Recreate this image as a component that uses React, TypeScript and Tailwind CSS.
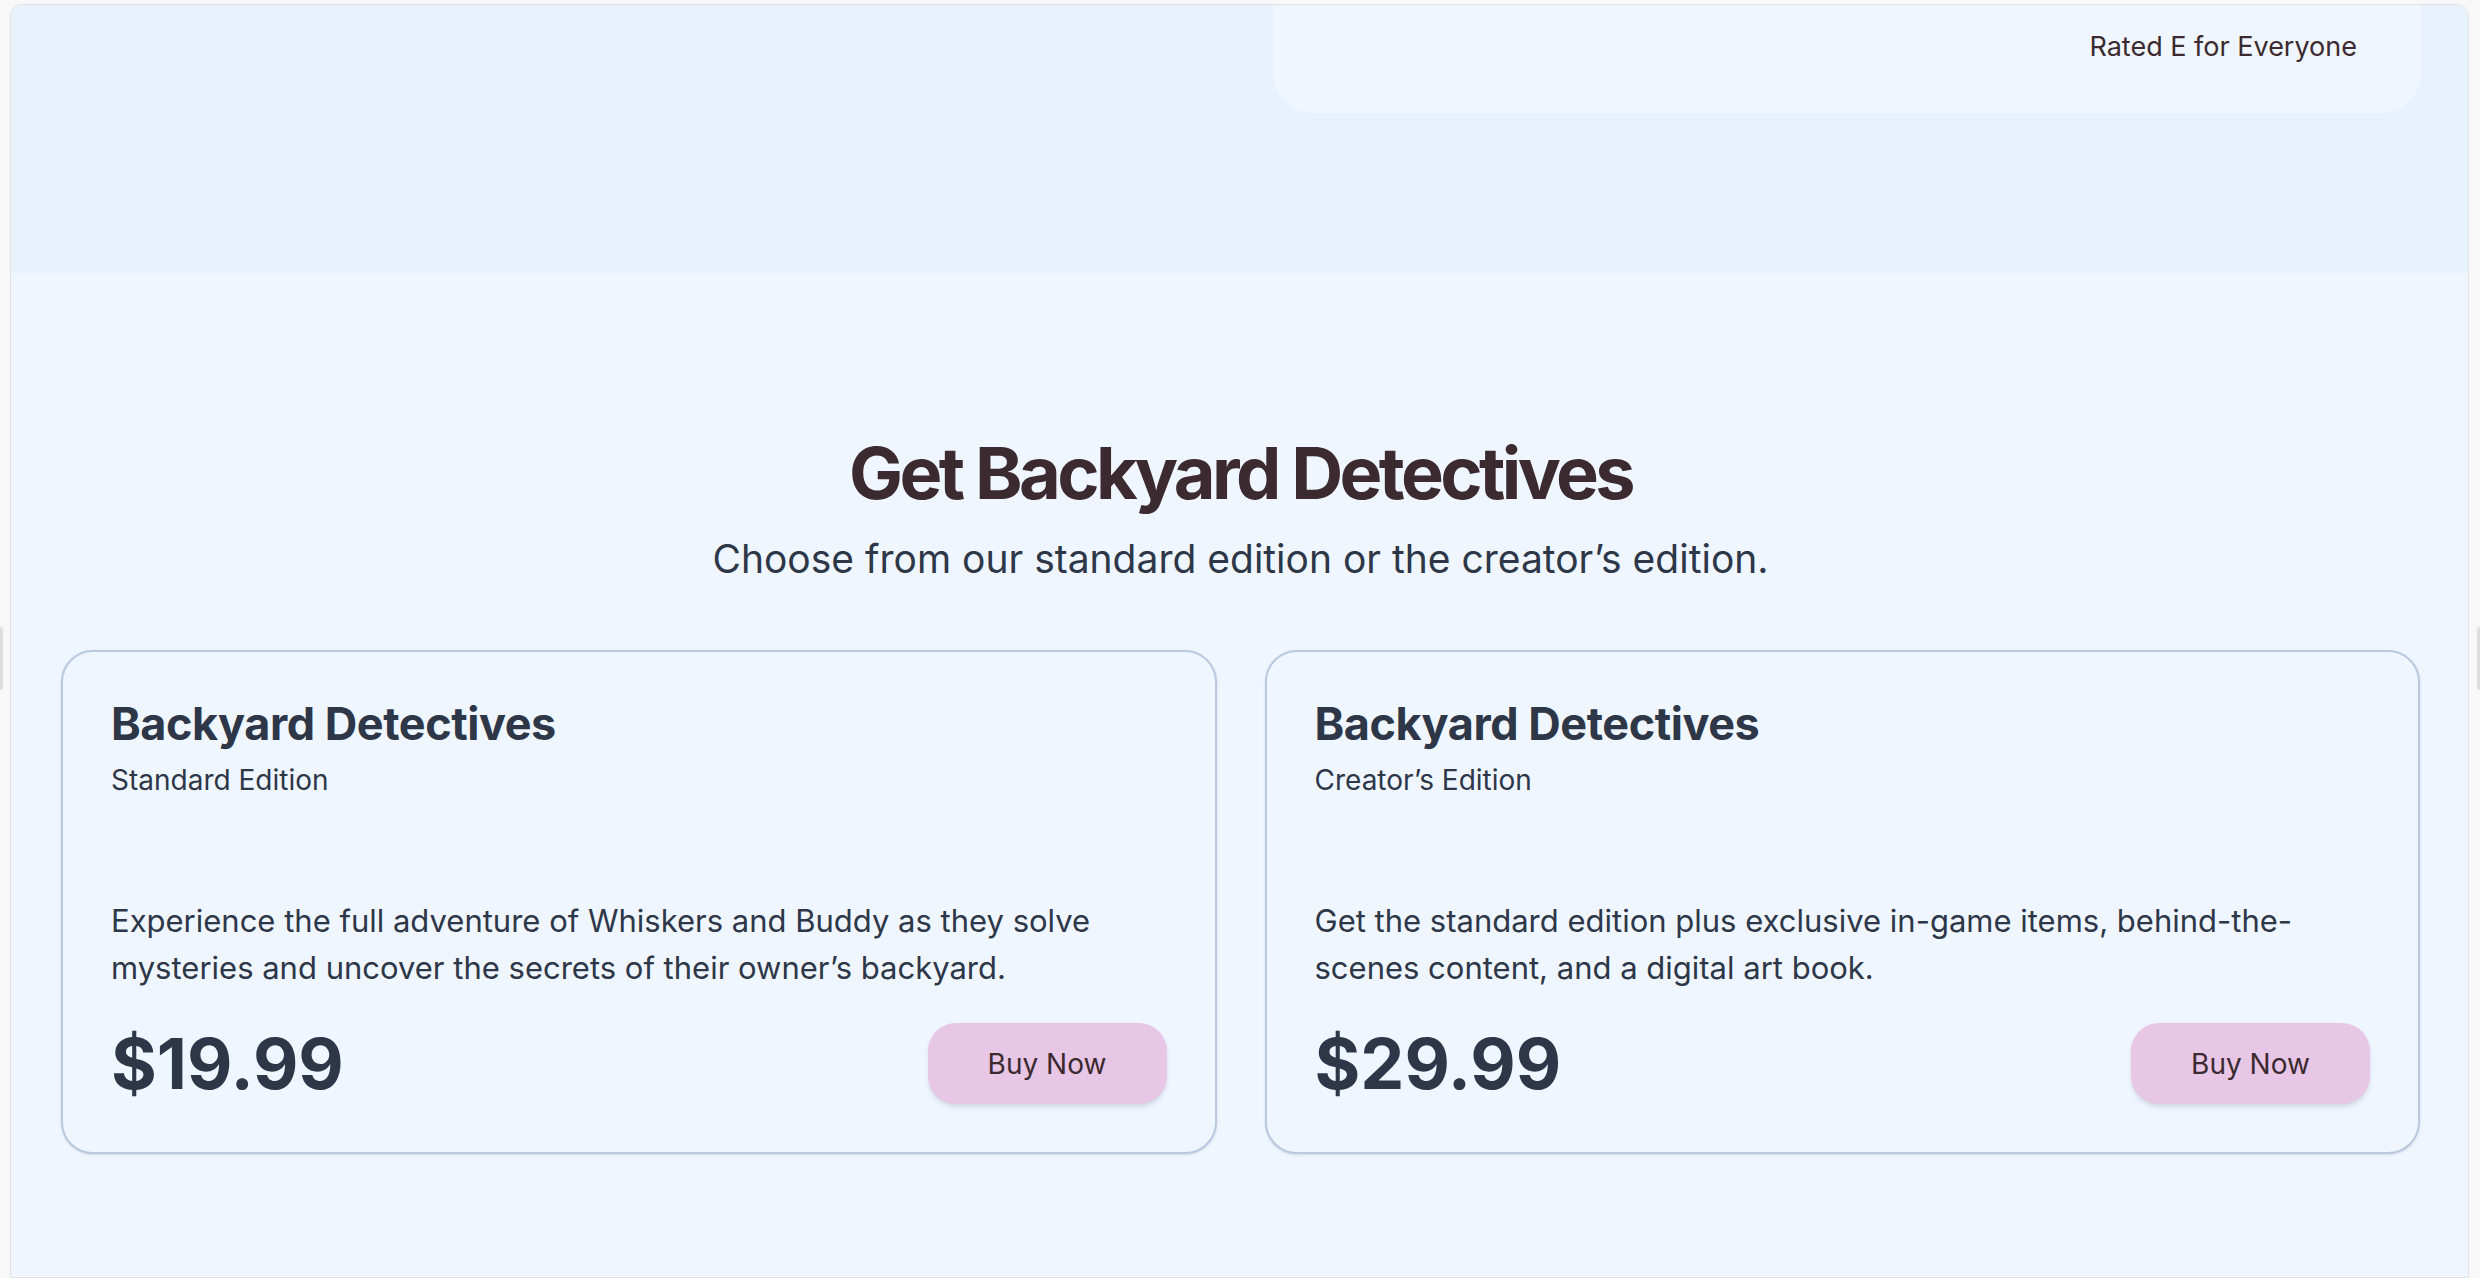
const editions = [
  {
    name: "Standard Edition",
    blurb:
      "Experience the full adventure of Whiskers and Buddy as they solve mysteries and uncover the secrets of their owner\u2019s backyard.",
    price: "$19.99",
  },
  {
    name: "Creator\u2019s Edition",
    blurb:
      "Get the standard edition plus exclusive in-game items, behind-the-scenes content, and a digital art book.",
    price: "$29.99",
  },
];

function EditionCard({ name, blurb, price }: { name: string; blurb: string; price: string }) {
  return (
    <div className="flex flex-col rounded-[32px] border-2 border-[#b9c9e0] bg-[#eff6ff] p-12 shadow-sm">
      <h3 className="mt-1 text-[45px] font-bold leading-10 tracking-[-0.01em] text-[#2d3748]">Backyard Detectives</h3>
      <p className="mt-[18px] text-[28px] leading-9 text-[#2d3748]">{name}</p>
      <p className="mt-[99px] text-[31px] leading-[47px] text-[#2d3748]">{blurb}</p>
      <div className="mt-8 flex items-center justify-between">
        <span className="text-[70px] font-bold leading-none text-[#2d3748]">{price}</span>
        <button className="h-[81px] w-[239px] rounded-[28px] bg-[#e8c6e6] text-[28px] text-[#3b2a30] shadow-md">
          Buy Now
        </button>
      </div>
    </div>
  );
}

export default function App() {
  return (
    <div className="relative h-[1278px] w-full overflow-hidden bg-[#f8f8f8] pl-[10px] pr-[11px] pt-[4px] font-['Inter',sans-serif]">
      <div className="absolute left-0 top-[627px] h-[63px] w-[3px] rounded-r bg-[#dedede]" />
      <div className="absolute right-0 top-[627px] h-[63px] w-[3px] rounded-l bg-[#dedede]" />

      <div className="h-full overflow-hidden rounded-t-[12px] border border-[#e2e2e2]">
        {/* hero tail */}
        <section className="flex h-[268px] justify-end bg-[#e8f2fd] pr-[47px]">
          <div className="flex h-[108px] w-[1148px] justify-end rounded-b-[40px] bg-[#eff6ff] pr-16 pt-6">
            <span className="text-[27px] leading-9 text-[#3b2a30]">Rated E for Everyone</span>
          </div>
        </section>

        {/* purchase */}
        <section className="h-full bg-[#eff6ff] pl-[50px] pr-[48px] pt-[164px]">
          <h2 className="text-center text-[72px] font-bold leading-none tracking-[-0.05em] text-[#3b2a30]">
            Get Backyard Detectives
          </h2>
          <p className="mt-[30px] text-center text-[39px] leading-10 text-[#2d3748]">
            Choose from our standard edition or the creator&rsquo;s edition.
          </p>
          <div className="mt-[71px] grid grid-cols-2 gap-12">
            {editions.map((e) => (
              <EditionCard key={e.name} {...e} />
            ))}
          </div>
        </section>
      </div>
    </div>
  );
}
